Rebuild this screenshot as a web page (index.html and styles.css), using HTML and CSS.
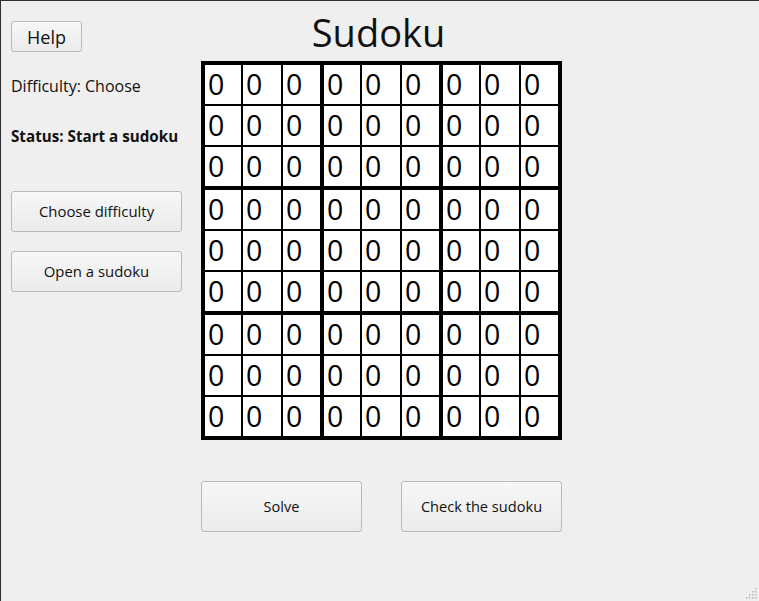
FILE: index.html
```html
<!DOCTYPE html>
<html>
<head>
<meta charset="utf-8">
<link rel="stylesheet" href="styles.css">
</head>
<body>
<div class="window">
  <div class="side">
    <button class="btn btn-help">Help</button>
    <div class="label label-diff">Difficulty: Choose</div>
    <div class="label label-status">Status: Start a sudoku</div>
    <button class="btn btn-side btn-first">Choose difficulty</button>
    <button class="btn btn-side btn-second">Open a sudoku</button>
  </div>
  <div class="main">
    <div class="title">Sudoku</div>
    <div class="board">
      <div class="box"><div class="cell">0</div><div class="cell">0</div><div class="cell">0</div><div class="cell">0</div><div class="cell">0</div><div class="cell">0</div><div class="cell">0</div><div class="cell">0</div><div class="cell">0</div></div>
      <div class="box"><div class="cell">0</div><div class="cell">0</div><div class="cell">0</div><div class="cell">0</div><div class="cell">0</div><div class="cell">0</div><div class="cell">0</div><div class="cell">0</div><div class="cell">0</div></div>
      <div class="box"><div class="cell">0</div><div class="cell">0</div><div class="cell">0</div><div class="cell">0</div><div class="cell">0</div><div class="cell">0</div><div class="cell">0</div><div class="cell">0</div><div class="cell">0</div></div>
      <div class="box"><div class="cell">0</div><div class="cell">0</div><div class="cell">0</div><div class="cell">0</div><div class="cell">0</div><div class="cell">0</div><div class="cell">0</div><div class="cell">0</div><div class="cell">0</div></div>
      <div class="box"><div class="cell">0</div><div class="cell">0</div><div class="cell">0</div><div class="cell">0</div><div class="cell">0</div><div class="cell">0</div><div class="cell">0</div><div class="cell">0</div><div class="cell">0</div></div>
      <div class="box"><div class="cell">0</div><div class="cell">0</div><div class="cell">0</div><div class="cell">0</div><div class="cell">0</div><div class="cell">0</div><div class="cell">0</div><div class="cell">0</div><div class="cell">0</div></div>
      <div class="box"><div class="cell">0</div><div class="cell">0</div><div class="cell">0</div><div class="cell">0</div><div class="cell">0</div><div class="cell">0</div><div class="cell">0</div><div class="cell">0</div><div class="cell">0</div></div>
      <div class="box"><div class="cell">0</div><div class="cell">0</div><div class="cell">0</div><div class="cell">0</div><div class="cell">0</div><div class="cell">0</div><div class="cell">0</div><div class="cell">0</div><div class="cell">0</div></div>
      <div class="box"><div class="cell">0</div><div class="cell">0</div><div class="cell">0</div><div class="cell">0</div><div class="cell">0</div><div class="cell">0</div><div class="cell">0</div><div class="cell">0</div><div class="cell">0</div></div>
    </div>
    <div class="actions">
      <button class="btn btn-action">Solve</button>
      <button class="btn btn-action">Check the sudoku</button>
    </div>
  </div>
  <svg class="grip" width="12" height="12" viewBox="0 0 12 12">
    <g fill="#b5b5b5">
      <rect x="9" y="0" width="1.5" height="1.5"/>
      <rect x="9" y="3" width="1.5" height="1.5"/><rect x="6" y="3" width="1.5" height="1.5"/>
      <rect x="9" y="6" width="1.5" height="1.5"/><rect x="6" y="6" width="1.5" height="1.5"/><rect x="3" y="6" width="1.5" height="1.5"/>
      <rect x="9" y="9" width="1.5" height="1.5"/><rect x="6" y="9" width="1.5" height="1.5"/><rect x="3" y="9" width="1.5" height="1.5"/><rect x="0" y="9" width="1.5" height="1.5"/>
    </g>
  </svg>
</div>
</body>
</html>
```

FILE: styles.css
```css
html, body {
  margin: 0;
  padding: 0;
  background: #efefef;
}

.window {
  position: relative;
  width: 759px;
  height: 601px;
  box-sizing: border-box;
  border-top: 1px solid #2e2e2e;
  border-left: 1px solid #2e2e2e;
  background: #efefef;
  display: flex;
  font-family: "Open Sans", "DejaVu Sans", sans-serif;
  color: #111;
  overflow: hidden;
}

.side {
  width: 200px;
  box-sizing: border-box;
  padding-left: 10px;
  display: flex;
  flex-direction: column;
  align-items: flex-start;
}

.btn {
  font-family: "Open Sans", "DejaVu Sans", sans-serif;
  color: #111;
  background: linear-gradient(#f7f7f7, #ebebeb);
  border: 1px solid #b9b9b9;
  border-radius: 3px;
  box-sizing: border-box;
  padding: 0 0 2px 0;
  margin: 0;
  display: flex;
  align-items: center;
  justify-content: center;
}

.btn-help {
  margin-top: 20px;
  width: 71px;
  height: 31px;
  font-size: 18px;
  padding-bottom: 0;
}

.label {
  height: 20px;
  line-height: 20px;
  white-space: nowrap;
}

.label-diff {
  margin-top: 24px;
  font-size: 16px;
}

.label-status {
  margin-top: 30px;
  font-size: 15.2px;
  font-weight: bold;
}

.btn-side {
  width: 171px;
  height: 41px;
  font-size: 14.9px;
}

.btn-first {
  margin-top: 45px;
}

.btn-second {
  margin-top: 19px;
}

.main {
  display: flex;
  flex-direction: column;
  align-items: flex-start;
}

.title {
  width: 355px;
  height: 60px;
  text-align: center;
  font-size: 38px;
  line-height: 62px;
}

.board {
  background: #000;
  padding: 4px;
  display: grid;
  grid-template-columns: repeat(3, auto);
  gap: 4px;
}

.box {
  display: grid;
  grid-template-columns: 36px 38px 37px;
  grid-template-rows: repeat(3, 39px);
  gap: 2px;
}

.cell {
  background: #fff;
  font-size: 28.5px;
  line-height: 39px;
  padding-left: 3px;
  color: #000;
}

.actions {
  margin-top: 41px;
  display: flex;
  gap: 39px;
}

.btn-action {
  width: 161px;
  height: 51px;
  font-size: 14.6px;
}

.grip {
  position: absolute;
  right: 1px;
  bottom: 1px;
}
```
